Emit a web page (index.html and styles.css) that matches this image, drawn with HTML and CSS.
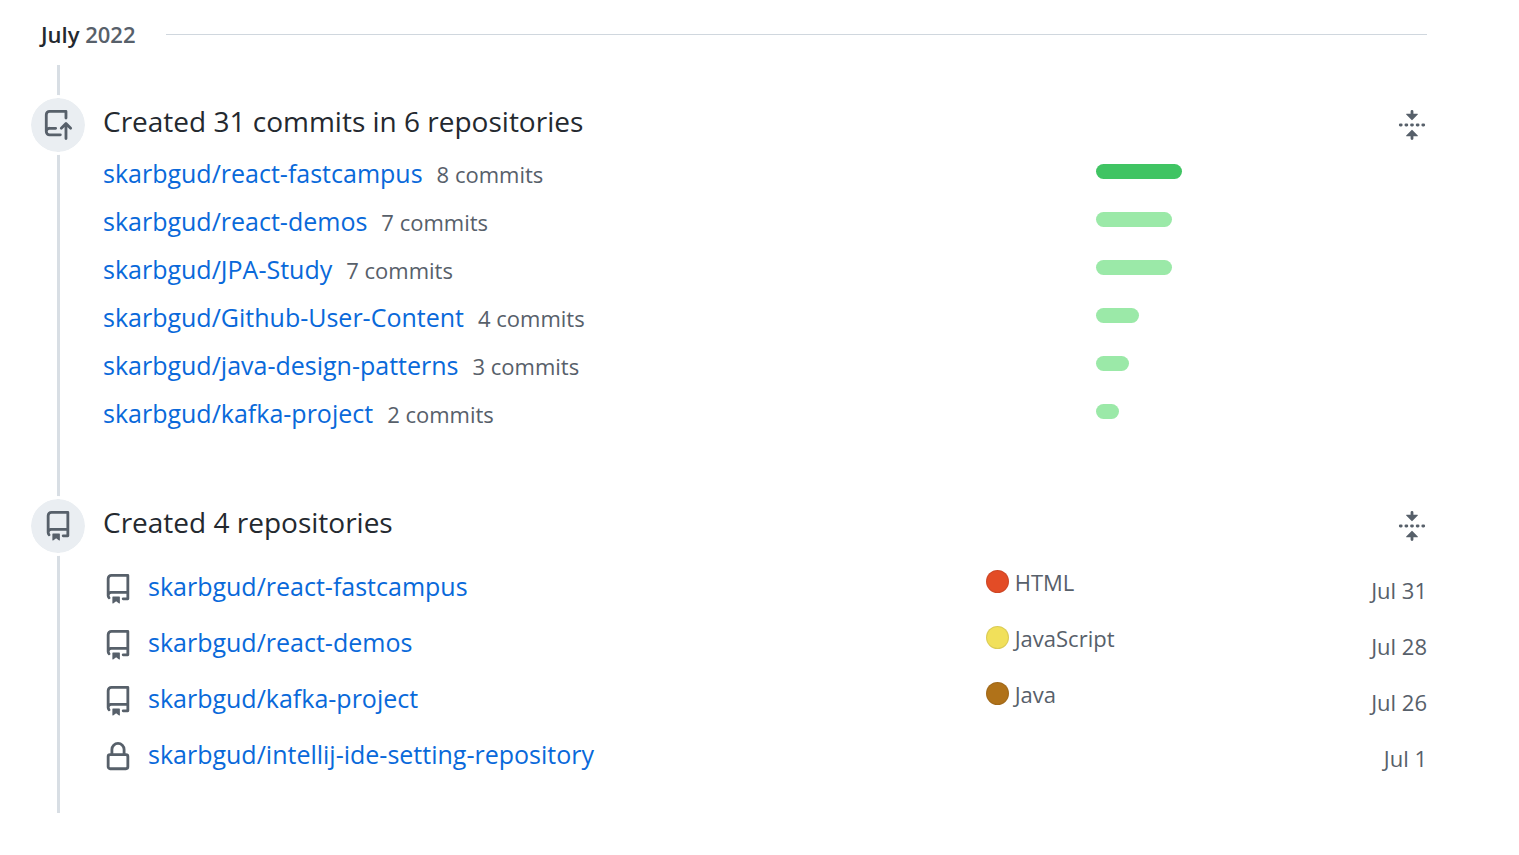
FILE: index.html
```
<!DOCTYPE html>
<html lang="en">
<head>
    <meta charset="UTF-8">
    <meta name="viewport" content="width=device-width, initial-scale=1.0">
    <title>Contribution activity</title>
    <link rel="stylesheet" href="styles.css">
</head>
<body>
    <!-- icons used below -->
    <svg class="sprite" aria-hidden="true">
        <symbol id="repo-push" viewBox="0 0 16 16"><path fill-rule="evenodd" d="M1 2.5A2.5 2.5 0 013.5 0h8.75a.75.75 0 01.75.75v3.5a.75.75 0 01-1.5 0V1.5h-8a1 1 0 00-1 1v6.708A2.492 2.492 0 013.5 9h3.25a.75.75 0 010 1.5H3.5a1 1 0 100 2h5.75a.75.75 0 010 1.5H3.5A2.5 2.5 0 011 11.5v-9zm13.23 7.79a.75.75 0 001.06-1.06l-2.505-2.505a.75.75 0 00-1.06 0L9.22 9.229a.75.75 0 001.06 1.061l1.225-1.224v6.184a.75.75 0 001.5 0V9.066l1.224 1.224z"/></symbol>
        <symbol id="repo" viewBox="0 0 16 16"><path fill-rule="evenodd" d="M2 2.5A2.5 2.5 0 014.5 0h8.75a.75.75 0 01.75.75v12.5a.75.75 0 01-.75.75h-2.5a.75.75 0 110-1.5h1.75v-2h-8a1 1 0 00-.714 1.7.75.75 0 01-1.072 1.05A2.495 2.495 0 012 11.5v-9zm10.5-1V9h-8c-.356 0-.694.074-1 .208V2.5a1 1 0 011-1h8zM5 12.25v3.25a.25.25 0 00.4.2l1.45-1.087a.25.25 0 01.3 0L8.6 15.7a.25.25 0 00.4-.2v-3.25a.25.25 0 00-.25-.25h-3.5a.25.25 0 00-.25.25z"/></symbol>
        <symbol id="lock" viewBox="0 0 16 16"><path fill-rule="evenodd" d="M4 4v2h-.25A1.75 1.75 0 002 7.75v5.5c0 .966.784 1.75 1.75 1.75h8.5A1.75 1.75 0 0014 13.25v-5.5A1.75 1.75 0 0012.25 6H12V4a4 4 0 10-8 0zm6.5 2V4a2.5 2.5 0 10-5 0v2h5zM12 7.5h.25a.25.25 0 01.25.25v5.5a.25.25 0 01-.25.25h-8.5a.25.25 0 01-.25-.25v-5.5a.25.25 0 01.25-.25H12z"/></symbol>
        <symbol id="fold" viewBox="0 0 16 16"><path fill-rule="evenodd" d="M10.896 2H8.75V.75a.75.75 0 00-1.5 0V2H5.104a.25.25 0 00-.177.427l2.896 2.896a.25.25 0 00.354 0l2.896-2.896A.25.25 0 0010.896 2zM8.75 15.25a.75.75 0 01-1.5 0V14H5.104a.25.25 0 01-.177-.427l2.896-2.896a.25.25 0 01.354 0l2.896 2.896a.25.25 0 01-.177.427H8.75v1.25zm-6.5-6.5a.75.75 0 000-1.5h-.5a.75.75 0 000 1.5h.5zM6 8a.75.75 0 01-.75.75h-.5a.75.75 0 010-1.5h.5A.75.75 0 016 8zm2.25.75a.75.75 0 000-1.5h-.5a.75.75 0 000 1.5h.5zM12 8a.75.75 0 01-.75.75h-.5a.75.75 0 010-1.5h.5A.75.75 0 0112 8zm2.25.75a.75.75 0 000-1.5h-.5a.75.75 0 000 1.5h.5z"/></symbol>
    </svg>

    <main class="activity">
        <h3 class="month">
            <span>July <span class="year">2022</span></span>
        </h3>

        <section class="item commits">
            <div class="badge"><svg class="icon"><use href="#repo-push"/></svg></div>
            <div class="item-body">
                <div class="item-head">
                    <h4>Created 31 commits in 6 repositories</h4>
                    <button type="button" class="fold" aria-label="Collapse"><svg class="icon"><use href="#fold"/></svg></button>
                </div>
                <ul class="commit-list">
                    <li>
                        <div class="name"><a href="#">skarbgud/react-fastcampus</a><span class="count">8 commits</span></div>
                        <div class="meter"><div class="bar top" style="width: 26%"></div></div>
                    </li>
                    <li>
                        <div class="name"><a href="#">skarbgud/react-demos</a><span class="count">7 commits</span></div>
                        <div class="meter"><div class="bar" style="width: 23%"></div></div>
                    </li>
                    <li>
                        <div class="name"><a href="#">skarbgud/JPA-Study</a><span class="count">7 commits</span></div>
                        <div class="meter"><div class="bar" style="width: 23%"></div></div>
                    </li>
                    <li>
                        <div class="name"><a href="#">skarbgud/Github-User-Content</a><span class="count">4 commits</span></div>
                        <div class="meter"><div class="bar" style="width: 13%"></div></div>
                    </li>
                    <li>
                        <div class="name"><a href="#">skarbgud/java-design-patterns</a><span class="count">3 commits</span></div>
                        <div class="meter"><div class="bar" style="width: 10%"></div></div>
                    </li>
                    <li>
                        <div class="name"><a href="#">skarbgud/kafka-project</a><span class="count">2 commits</span></div>
                        <div class="meter"><div class="bar" style="width: 7%"></div></div>
                    </li>
                </ul>
            </div>
        </section>

        <section class="item repos">
            <div class="badge"><svg class="icon"><use href="#repo"/></svg></div>
            <div class="item-body">
                <div class="item-head">
                    <h4>Created 4 repositories</h4>
                    <button type="button" class="fold" aria-label="Collapse"><svg class="icon"><use href="#fold"/></svg></button>
                </div>
                <ul class="repo-list">
                    <li>
                        <div class="name"><svg class="icon"><use href="#repo"/></svg><a href="#">skarbgud/react-fastcampus</a></div>
                        <div class="language"><span class="dot html"></span>HTML</div>
                        <time class="date" datetime="2022-07-31">Jul 31</time>
                    </li>
                    <li>
                        <div class="name"><svg class="icon"><use href="#repo"/></svg><a href="#">skarbgud/react-demos</a></div>
                        <div class="language"><span class="dot javascript"></span>JavaScript</div>
                        <time class="date" datetime="2022-07-28">Jul 28</time>
                    </li>
                    <li>
                        <div class="name"><svg class="icon"><use href="#repo"/></svg><a href="#">skarbgud/kafka-project</a></div>
                        <div class="language"><span class="dot java"></span>Java</div>
                        <time class="date" datetime="2022-07-26">Jul 26</time>
                    </li>
                    <li>
                        <div class="name"><svg class="icon"><use href="#lock"/></svg><a href="#">skarbgud/intellij-ide-setting-repository</a></div>
                        <div class="language"></div>
                        <time class="date" datetime="2022-07-01">Jul 1</time>
                    </li>
                </ul>
            </div>
        </section>
    </main>
</body>
</html>
```
FILE: styles.css
```
* {
    box-sizing: border-box;
    margin: 0;
    padding: 0;
}

body {
    background: #fff;
    color: #24292f;
    font-family: "Segoe UI", "Open Sans", "Noto Sans", sans-serif;
    font-size: 22px;
    line-height: 32px;
}

a {
    color: #0969da;
    font-size: 25px;
    text-decoration: none;
}

a:hover {
    text-decoration: underline;
}

ul {
    list-style: none;
}

.sprite {
    display: none;
}

.icon {
    display: block;
    flex: none;
    width: 30px;
    height: 30px;
    fill: #57606a;
}

.activity {
    padding: 17px 92px 40px 28px;
}

.month {
    display: flex;
    align-items: center;
    gap: 30px;
    padding-left: 13px;
    margin-bottom: 14px;
    font-size: 22px;
    font-weight: 600;
    line-height: 34px;
}

.month::after {
    content: "";
    flex: 1;
    height: 1px;
    background: #d0d7de;
}

.year {
    color: #57606a;
}

/* timeline */
.item {
    position: relative;
    display: flex;
    gap: 15px;
    padding-top: 30px;
}

.item::before {
    content: "";
    position: absolute;
    top: 0;
    bottom: 0;
    left: 29px;
    width: 3px;
    background: #d8dee4;
}

.badge {
    position: relative;
    display: flex;
    flex: none;
    align-items: center;
    justify-content: center;
    width: 60px;
    height: 60px;
    border: 3px solid #fff;
    border-radius: 50%;
    background: #eaeef2;
    background-clip: padding-box;
}

.item-body {
    flex: 1;
    min-width: 0;
}

.item-head {
    display: flex;
    justify-content: space-between;
    height: 56px;
    padding-top: 6px;
}

.item-head h4 {
    font-size: 28px;
    font-weight: 400;
    line-height: 40px;
}

.fold {
    align-self: flex-start;
    margin-top: 9px;
    border: 0;
    background: none;
    cursor: pointer;
}

/* commits */
.commits {
    padding-bottom: 27px;
}

.commit-list li {
    display: flex;
    height: 48px;
}

.commit-list .name {
    flex: 1;
    line-height: 44px;
}

.count {
    margin-left: 14px;
    color: #57606a;
}

.meter {
    width: 25%;
    padding-top: 13px;
}

.bar {
    height: 15px;
    border-radius: 8px;
    background: #9be9a8;
}

.bar.top {
    background: #40c463;
}

/* repositories */
.repos {
    padding-bottom: 27px;
}

.repo-list {
    padding-top: 10px;
}

.repo-list li {
    display: flex;
    height: 56px;
    padding-top: 8px;
}

.repo-list .name {
    display: flex;
    flex: 1;
    gap: 15px;
}

.repo-list .icon {
    margin-top: 4px;
}

.language,
.date {
    width: calc(100% / 6);
    color: #57606a;
}

.language {
    display: flex;
    align-items: flex-start;
    gap: 6px;
    line-height: 24px;
}

.dot {
    width: 23px;
    height: 23px;
    border: 1px solid rgba(27, 31, 36, 0.1);
    border-radius: 50%;
}

.dot.html {
    background: #e34c26;
}

.dot.javascript {
    background: #f1e05a;
}

.dot.java {
    background: #b07219;
}

.date {
    padding-top: 4px;
    text-align: right;
}
```
